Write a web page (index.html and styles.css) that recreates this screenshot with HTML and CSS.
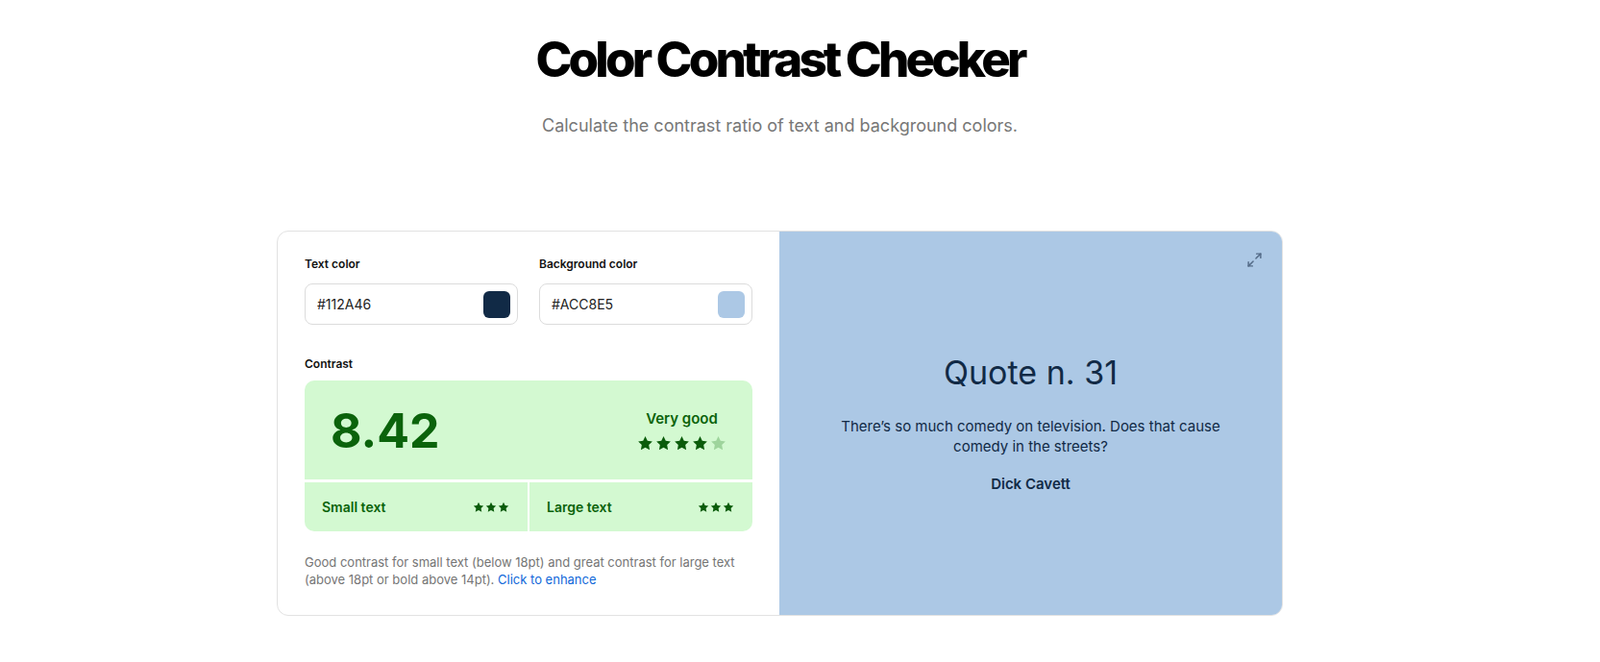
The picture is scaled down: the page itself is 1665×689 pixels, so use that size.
FILE: index.html
```html
<!DOCTYPE html>
<html lang="en">
<head>
    <meta charset="UTF-8">
    <meta name="viewport" content="width=device-width, initial-scale=1.0">
    <title>Color Contrast Checker</title>

    <link rel="stylesheet" href="styles.css">
</head>
<body>
    <svg width="0" height="0" style="position:absolute">
        <symbol id="star" viewBox="0 0 24 24">
            <path d="M12 1.5l3.2 6.6 7.2 1-5.2 5.1 1.3 7.2L12 18l-6.5 3.4 1.3-7.2L1.6 9.1l7.2-1z"/>
        </symbol>
    </svg>

    <main class="page">
        <h1 class="title">Color Contrast Checker</h1>
        <p class="subtitle">Calculate the contrast ratio of text and background colors.</p>

        <section class="checker">
            <div class="controls">
                <div class="fields">
                    <div class="field">
                        <label for="textColor">Text color</label>
                        <div class="color-input">
                            <input type="text" id="textColor" value="#112A46">
                            <span class="swatch swatch-text"></span>
                        </div>
                    </div>
                    <div class="field">
                        <label for="bgColor">Background color</label>
                        <div class="color-input">
                            <input type="text" id="bgColor" value="#ACC8E5">
                            <span class="swatch swatch-bg"></span>
                        </div>
                    </div>
                </div>

                <div class="field-label">Contrast</div>
                <div class="result">
                    <div class="result-main">
                        <span class="ratio">8.42</span>
                        <div class="rating">
                            <span class="rating-text">Very good</span>
                            <div class="stars">
                                <svg><use href="#star"/></svg>
                                <svg><use href="#star"/></svg>
                                <svg><use href="#star"/></svg>
                                <svg><use href="#star"/></svg>
                                <svg class="off"><use href="#star"/></svg>
                            </div>
                        </div>
                    </div>
                    <div class="result-cell">
                        <span>Small text</span>
                        <div class="stars small">
                            <svg><use href="#star"/></svg>
                            <svg><use href="#star"/></svg>
                            <svg><use href="#star"/></svg>
                        </div>
                    </div>
                    <div class="result-cell">
                        <span>Large text</span>
                        <div class="stars small">
                            <svg><use href="#star"/></svg>
                            <svg><use href="#star"/></svg>
                            <svg><use href="#star"/></svg>
                        </div>
                    </div>
                </div>

                <p class="note">Good contrast for small text (below 18pt) and great contrast for large text (above 18pt or bold above 14pt). <a href="#">Click to enhance</a></p>
            </div>

            <div class="preview">
                <button class="expand" aria-label="Fullscreen">
                    <svg viewBox="0 0 24 24" fill="none" stroke="currentColor" stroke-width="2" stroke-linecap="round" stroke-linejoin="round">
                        <polyline points="15 3 21 3 21 9"/>
                        <polyline points="9 21 3 21 3 15"/>
                        <line x1="21" y1="3" x2="14" y2="10"/>
                        <line x1="3" y1="21" x2="10" y2="14"/>
                    </svg>
                </button>
                <h2 class="quote-title">Quote n. 31</h2>
                <p class="quote-text">There’s so much comedy on television. Does that cause comedy in the streets?</p>
                <p class="quote-author">Dick Cavett</p>
            </div>
        </section>
    </main>
</body>
</html>
```

FILE: styles.css
```css
body {
    margin: 0;
    font-family: Inter, "Noto Sans", sans-serif;
    color: #111;
    background-color: #fff;
}

.page {
    display: flex;
    flex-direction: column;
    align-items: center;
    padding-right: 42px;
}

.title {
    margin: 31px 0 0;
    font-size: 51px;
    line-height: 1.2;
    font-weight: 800;
    letter-spacing: -0.075em;
    color: #000;
}

.subtitle {
    margin: 25px 0 0;
    font-size: 18px;
    line-height: 28px;
    color: #777;
}

.checker {
    margin-top: 95px;
    width: 1047px;
    height: 401px;
    box-sizing: border-box;
    display: grid;
    grid-template-columns: 522px 1fr;
    border: 1px solid #e2e2e2;
    border-radius: 12px;
    overflow: hidden;
}

.controls {
    min-width: 0;
    padding: 26px 28px 28px;
}

.fields {
    display: grid;
    grid-template-columns: minmax(0, 1fr) minmax(0, 1fr);
    gap: 22px;
}

.field label,
.field-label {
    display: block;
    font-size: 12px;
    line-height: 16px;
    font-weight: 600;
    color: #111;
    margin-bottom: 12px;
}

.color-input {
    display: flex;
    align-items: center;
    height: 43px;
    box-sizing: border-box;
    border: 1px solid #dcdcdc;
    border-radius: 8px;
    padding: 0 7px 0 12px;
}

.color-input input {
    flex: 1;
    width: 0;
    min-width: 0;
    border: none;
    outline: none;
    padding: 0;
    font-family: inherit;
    font-size: 14px;
    color: #222;
    background: transparent;
}

.swatch {
    width: 28px;
    height: 28px;
    border-radius: 6px;
}

.swatch-text {
    background-color: #112a46;
}

.swatch-bg {
    background-color: #acc8e5;
}

.field-label {
    margin-top: 33px;
    margin-bottom: 9px;
}

.result {
    display: grid;
    grid-template-columns: 1fr 1fr;
    grid-template-rows: 103px 51px;
    row-gap: 3px;
    column-gap: 2px;
    border-radius: 10px;
    overflow: hidden;
    color: #0b630b;
}

.result-main,
.result-cell {
    background-color: #d3f9d1;
}

.result-main {
    grid-column: 1 / 3;
    display: flex;
    align-items: center;
    justify-content: space-between;
    padding: 0 27px 0 27px;
}

.ratio {
    font-size: 50px;
    line-height: 1;
    font-weight: 700;
}

.rating {
    display: flex;
    flex-direction: column;
    align-items: center;
    gap: 7px;
}

.rating-text {
    font-size: 15px;
    line-height: 20px;
    font-weight: 600;
}

.stars {
    display: flex;
    gap: 2px;
    color: #0b5c0b;
}

.stars svg {
    width: 17px;
    height: 17px;
    fill: currentColor;
}

.stars svg.off {
    color: #9ed49c;
}

.stars.small {
    gap: 1px;
}

.stars.small svg {
    width: 12px;
    height: 12px;
}

.result-cell {
    display: flex;
    align-items: center;
    justify-content: space-between;
    padding: 0 19px 0 18px;
    font-size: 14px;
    font-weight: 600;
}

.note {
    margin: 23px 0 0;
    font-size: 13px;
    line-height: 18px;
    color: #757575;
}

.note a {
    color: #1168d9;
    text-decoration: none;
}

.preview {
    position: relative;
    background-color: #acc8e5;
    color: #112a46;
    display: flex;
    flex-direction: column;
    align-items: center;
    justify-content: center;
    padding: 0 60px;
    text-align: center;
}

.expand {
    position: absolute;
    top: 21px;
    right: 20px;
    width: 18px;
    height: 18px;
    padding: 0;
    border: none;
    background: none;
    color: #536a86;
    cursor: pointer;
}

.expand svg {
    width: 17px;
    height: 17px;
}

.quote-title {
    margin: 0;
    font-size: 34px;
    line-height: 41px;
    font-weight: 400;
}

.quote-text {
    margin: 25px 0 0;
    font-size: 15px;
    line-height: 21px;
}

.quote-author {
    margin: 18px 0 0;
    font-size: 15px;
    line-height: 21px;
    font-weight: 600;
}
```
